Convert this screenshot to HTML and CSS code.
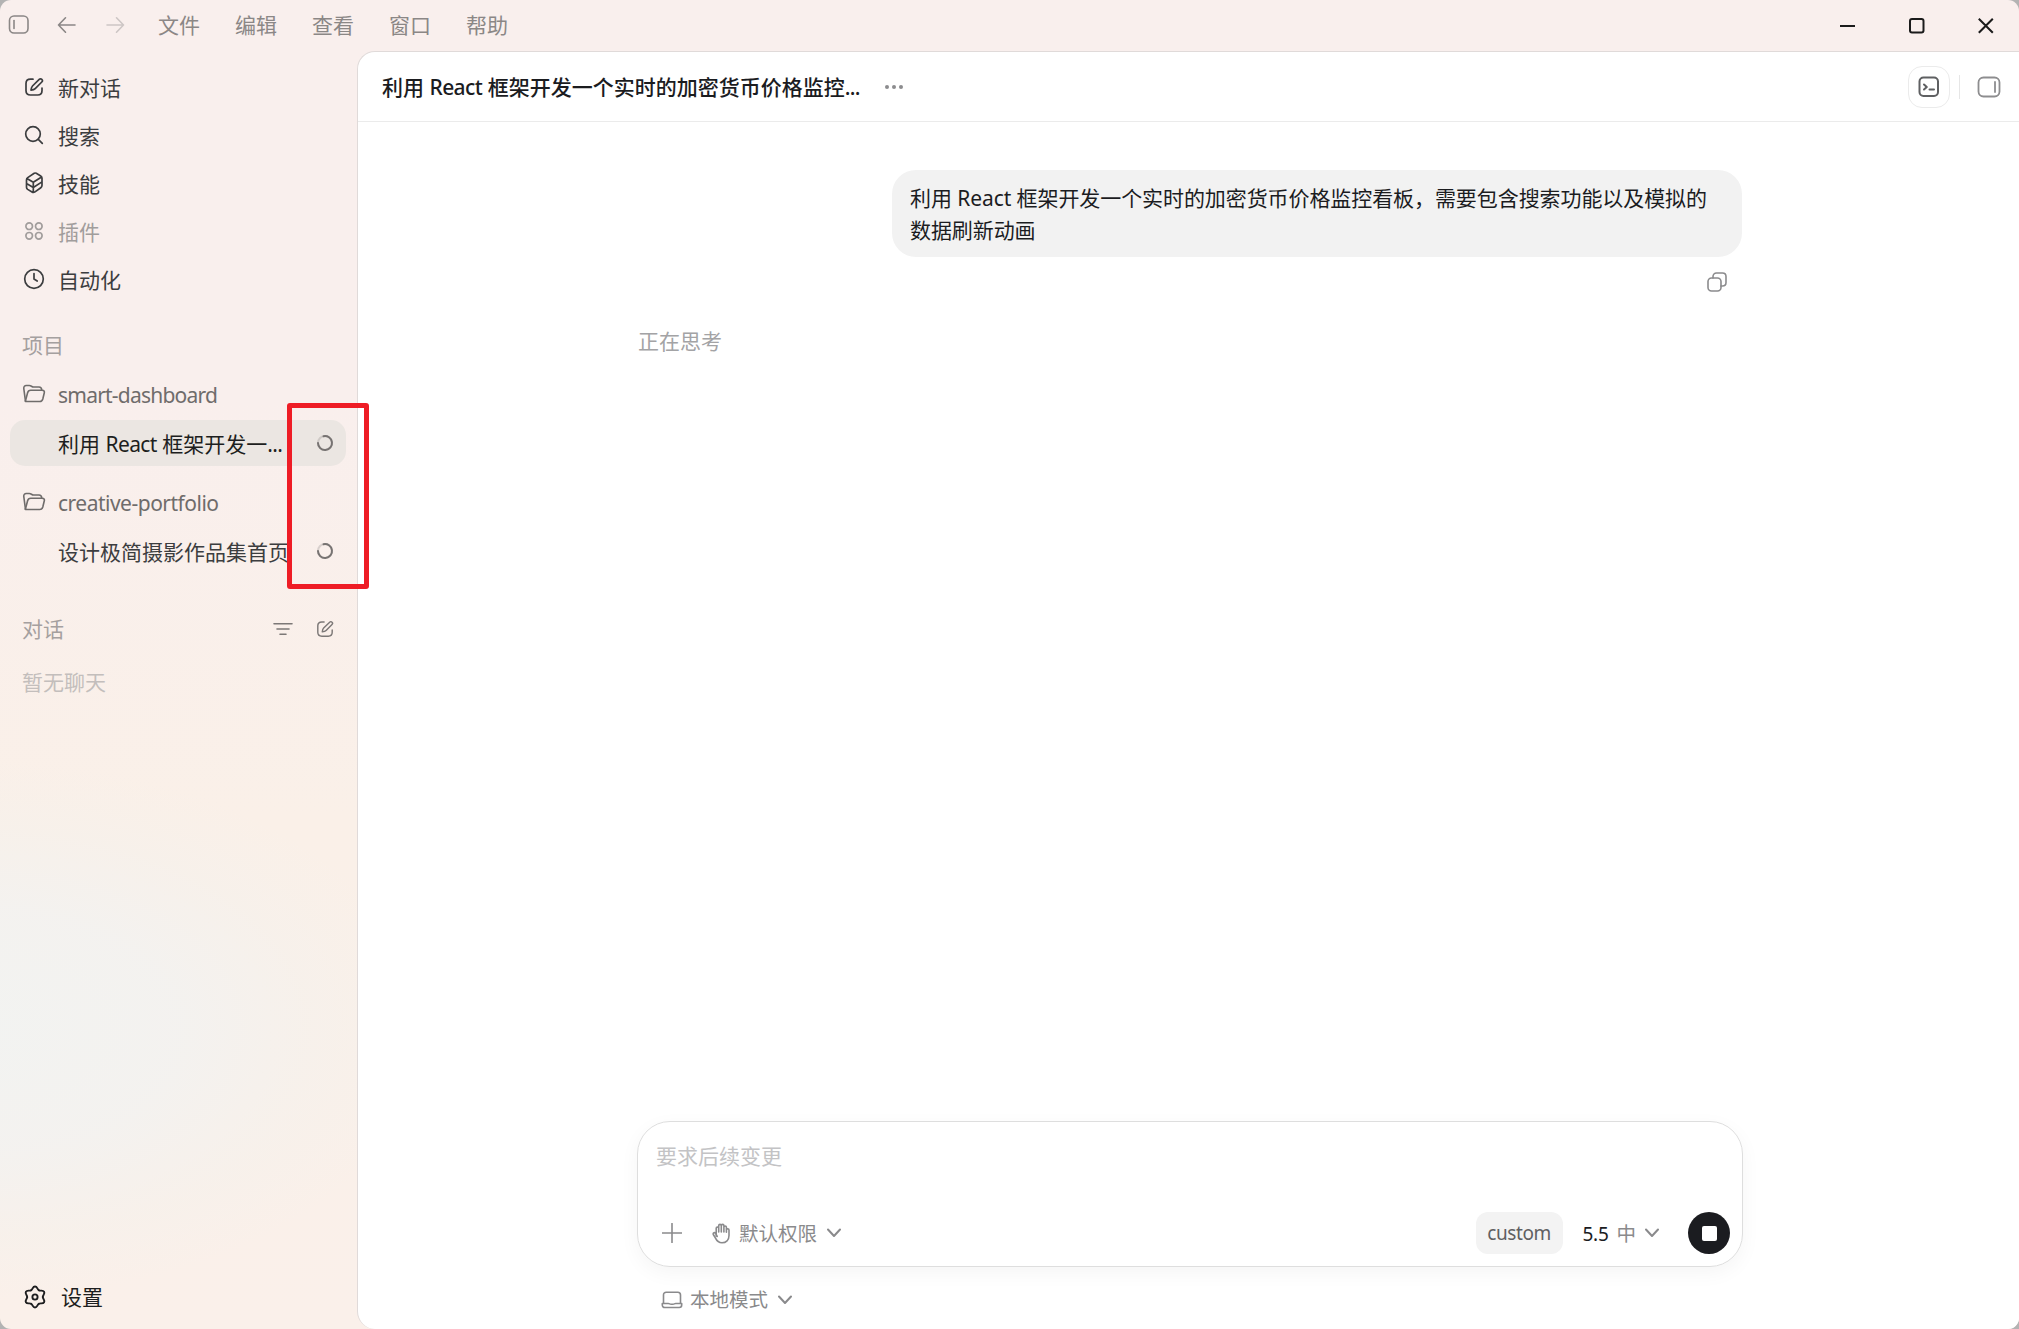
FILE: index.html
```
<!DOCTYPE html>
<html lang="zh-CN">
<head>
<meta charset="utf-8">
<title>对话</title>
<link rel="stylesheet" href="styles.css">
</head>
<body>
<svg width="0" height="0" class="defs">
  <symbol id="edit" viewBox="0 0 20 20"><path d="M9 2.200H6.500C3.800 2.200 2 3.800 2 6.500v7.200C2 16.400 3.800 18 6.500 18h7.200c2.700 0 4.300-1.800 4.300-4.300V11"/><path d="M15.200 2.400c.8-.8 1.900-.7 2.600 0s.8 1.800 0 2.600l-6.600 6.700c-.8.800-2 1.300-4.200 1.500.2-2.200.6-3.300 1.500-4.200z"/></symbol>
  <symbol id="folder" viewBox="0 0 24 20"><path d="M3.500 17.300L1.800 4.600C1.600 2.800 2.500 1.500 4.300 1.500h3c2 0 2.300 1.500 4.300 1.500H17c1.600 0 2.600 1 2.700 3"/><path d="M3.400 17.100L5.600 8.800C6 7 7 6.200 8.700 6.200h11.500c1.800 0 2.500 1 2.100 2.600l-1.500 6.200c-.5 1.800-1.300 2.500-3 2.500H5.300c-1.300 0-2-.1-1.900-.4z"/></symbol>
  <symbol id="chev" viewBox="0 0 14 10"><path d="M1 1.500l6 6.500 6-6.500"/></symbol>
  <symbol id="spin" viewBox="0 0 18 18"><circle cx="9" cy="9" r="7" opacity=".25"/><path d="M7.500 2.200A7 7 0 1 1 2 9"/></symbol>
  <path id="lobe" d="M8.100 5.250C9.900 4.200 9.600 1.500 12 1.500S14.100 4.200 15.900 5.250"/>
</svg>
<div class="window">
  <header class="titlebar">
    <svg class="tb-side" width="22" height="20" viewBox="0 0 22 20"><rect x="1.500" y="1" width="18.500" height="17" rx="4.500"/><path d="M6 5.500v8"/></svg>
    <svg class="tb-back" width="20" height="18" viewBox="0 0 20 18"><path d="M8.500 1.800L1.500 9l7 7.200M1.500 9h16.500"/></svg>
    <svg class="tb-fwd" width="20" height="18" viewBox="0 0 20 18"><path d="M10.500 1.800L17.500 9l-7 7.200M17.500 9H1"/></svg>
    <nav class="menus"><span>文件</span><span>编辑</span><span>查看</span><span>窗口</span><span>帮助</span></nav>
    <div class="controls">
      <svg width="16" height="16" viewBox="0 0 16 16"><path d="M0 8h15"/></svg>
      <svg width="16" height="16" viewBox="0 0 16 16"><rect x="1" y="1" width="13.500" height="13.500" rx="2"/></svg>
      <svg width="16" height="16" viewBox="0 0 16 16"><path d="M.8.800l14 14M14.800.800l-14 14"/></svg>
    </div>
  </header>
  <div class="body">
    <aside class="sidebar">
      <nav class="nav">
        <a class="item"><svg width="20" height="20"><use href="#edit"/></svg>新对话</a>
        <a class="item"><svg width="20" height="20" viewBox="0 0 20 20"><circle cx="9" cy="9" r="7.300"/><path d="M14.300 14.300l4 4"/></svg>搜索</a>
        <a class="item"><svg width="20" height="22" viewBox="0 0 20 22"><path d="M10.200 1.300Q11.300.700 12.300 1.300L16.700 4Q18 4.800 18 6.300V13.300Q18 14.800 16.800 15.700L11 19.900Q9.500 21 8 20.100L3.700 17.400Q2.500 16.600 2.500 15.200V8Q2.500 6.500 3.700 5.600ZM2.900 6.500L9.300 10.300L17.600 5M9.300 10.300V20.500M2.500 11.600L9.300 15.500L18 9.900"/></svg>技能</a>
        <a class="item muted"><svg width="20" height="20" viewBox="0 0 20 20"><circle cx="5.200" cy="5.200" r="3.300"/><circle cx="14.800" cy="5.200" r="3.300"/><circle cx="5.200" cy="14.800" r="3.300"/><circle cx="14.800" cy="14.800" r="3.300"/></svg>插件</a>
        <a class="item"><svg class="wide" width="22" height="22" viewBox="0 0 22 22"><circle cx="11" cy="11" r="9.300"/><path d="M11 5.500V11l3.200 2"/></svg>自动化</a>
      </nav>
      <div class="section">项目</div>
      <div class="folder"><svg width="24" height="20"><use href="#folder"/></svg><span class="f1">smart-dashboard</span></div>
      <div class="chat active"><span>利用 <i>React</i> 框架开发一<i>...</i></span><svg width="18" height="18"><use href="#spin"/></svg></div>
      <div class="folder second"><svg width="24" height="20"><use href="#folder"/></svg><span class="f2">creative-portfolio</span></div>
      <div class="chat"><span>设计极简摄影作品集首页</span><svg width="18" height="18"><use href="#spin"/></svg></div>
      <div class="section talk">对话
        <svg class="filter" width="20" height="14" viewBox="0 0 20 14"><path d="M1 1.700h18M4 7h12M7 12.300h6"/></svg>
        <svg width="18" height="18"><use href="#edit"/></svg>
      </div>
      <div class="empty">暂无聊天</div>
      <div class="settings"><svg width="24" height="24" viewBox="0 0 24 24"><use href="#lobe"/><use href="#lobe" transform="rotate(60 12 12)"/><use href="#lobe" transform="rotate(120 12 12)"/><use href="#lobe" transform="rotate(180 12 12)"/><use href="#lobe" transform="rotate(240 12 12)"/><use href="#lobe" transform="rotate(300 12 12)"/><circle cx="12" cy="12" r="2.600"/></svg>设置</div>
    </aside>
    <main class="panel">
      <div class="head">
        <h1>利用 <i>React</i> 框架开发一个实时的加密货币价格监控<i>...</i></h1>
        <svg class="dots" width="20" height="6" viewBox="0 0 20 6"><circle cx="3" cy="3" r="2"/><circle cx="10" cy="3" r="2"/><circle cx="17" cy="3" r="2"/></svg>
        <button class="term"><svg width="22" height="22" viewBox="0 0 22 22"><rect x="1.500" y="1.500" width="18.500" height="18.500" rx="4"/><path d="M6 8.500l2.800 2.500L6 13.500M11.500 13.500h4.500"/></svg></button>
        <span class="sep"></span>
        <svg class="rpanel" width="24" height="22" viewBox="0 0 24 22"><rect x="1.500" y="1.500" width="21" height="19" rx="5"/><path d="M18 6v10"/></svg>
      </div>
      <div class="thread">
        <div class="bubble">利用 React 框架开发一个实时的加密货币价格监控看板，需要包含搜索功能以及模拟的数据刷新动画</div>
        <svg class="copy" width="20" height="20" viewBox="0 0 20 20"><rect x="1" y="6" width="13" height="13" rx="3.500"/><path d="M6 6V4.500C6 2.500 7.500 1 9.500 1h6C17.500 1 19 2.500 19 4.500v6c0 2-1.500 3.500-3.500 3.500H14"/></svg>
        <div class="thinking">正在思考</div>
      </div>
      <div class="composer">
        <div class="placeholder">要求后续变更</div>
        <div class="tools">
          <svg class="plus" width="20" height="20" viewBox="0 0 20 20"><path d="M10 .5v19M.5 10h19"/></svg>
          <svg class="hand" width="18" height="21" viewBox="0 0 18 21"><path d="M4.200 13V5.300c0-1.700 2.500-1.700 2.500 0V9M6.700 5.300V2.700c0-1.800 2.600-1.800 2.600 0V9M9.300 2.700c0-1.800 2.600-1.800 2.600 0V9M11.900 4.300c0-1.800 2.500-1.800 2.500 0v5M14.400 7c0-1.700 2.600-1.700 2.600 0v5.500c0 4.500-3 7.300-7 7.300-3.500 0-5.300-2-6.500-4.600L1.300 11.500c-.6-1.800 1.400-2.500 2.300-1L5.200 13.500"/></svg>
          <span class="perm">默认权限</span>
          <svg class="chev" width="14" height="10"><use href="#chev"/></svg>
          <span class="custom">custom</span>
          <span class="ver">5.5</span><span class="mid">中</span>
          <svg class="chev c2" width="14" height="10"><use href="#chev"/></svg>
          <span class="stop"></span>
        </div>
      </div>
      <div class="mode">
        <svg width="22" height="18" viewBox="0 0 22 18"><path d="M2.500 12.500V4c0-1.700 1-2.700 2.700-2.700h11.600c1.700 0 2.700 1 2.700 2.700v8.500M1.300 12.500h6c1.200 0 1.500.7 2.700.7h2c1.200 0 1.500-.7 2.700-.7h6v1.500c0 1.500-1 2.500-2.500 2.500H3.800c-1.500 0-2.500-1-2.500-2.500z"/></svg>
        <span>本地模式</span>
        <svg class="chev" width="14" height="10"><use href="#chev"/></svg>
      </div>
    </main>
  </div>
  <div class="marker"></div>
</div>
</body>
</html>
```
FILE: styles.css
```
* { box-sizing: border-box; }
html { background: #b3b3b3; }
body { margin: 0; height: 1329px; overflow: hidden; font: 21px/30px "Noto Sans", "Noto Sans CJK SC", sans-serif; color: #3c3d3f; }
.defs { position: absolute; }
i { font-style: normal; letter-spacing: -0.6px; }
svg { flex: none; fill: none; stroke: currentColor; stroke-width: 1.6; stroke-linecap: round; stroke-linejoin: round; }
.window {
  position: relative; height: 1329px; display: flex; flex-direction: column; border-radius: 11px; overflow: hidden;
  background:
    radial-gradient(ellipse 460px 270px at -30px 1030px, #f2f3f1 0, #f3f2f0e6 45%, #f5f1ec99 75%, #faf0e900 100%),
    linear-gradient(#f9efed 0, #f9efed 400px, #faf0e8 820px, #faf0ea 100%);
}
.titlebar { height: 51px; flex: none; display: flex; align-items: center; color: #8b8786; padding: 0 25px 0 8px; }
.titlebar > svg { margin-top: -1px; }
.titlebar > .tb-back { margin-left: 27px; }
.titlebar > .tb-fwd { margin-left: 29px; color: #cdc6c5; }
.menus { display: flex; gap: 35px; margin: -1px 0 0 32px; }
.controls { margin-left: auto; display: flex; gap: 53px; color: #1b1b1b; padding-top: 1px; }
.controls svg { stroke-width: 2; stroke-linecap: butt; }
.body { flex: 1; display: flex; min-height: 0; }
.sidebar { width: 357px; flex: none; padding: 13px 11px 0 10px; display: flex; flex-direction: column; }
.item { display: flex; align-items: center; height: 48px; padding-left: 14px; }
.item svg { margin: -2px 14px 0 0; stroke-width: 1.7; }
.item .wide { margin: -2px 13px 0 -1px; }
.muted { color: #a19d9c; }
.section { height: 46px; display: flex; align-items: center; padding-left: 12px; color: #a5a09f; margin-top: 18px; }
.folder { height: 50px; display: flex; align-items: center; gap: 12px; padding-left: 12px; color: #6f6c6b; margin-top: 2px; }
.folder svg { margin-top: -2px; }
.folder span { letter-spacing: -0.78px; margin-top: -1px; }
.folder .f2 { letter-spacing: -0.5px; }
.chat { height: 46px; border-radius: 15px; display: flex; align-items: center; justify-content: space-between; padding: 2px 12px 0 48px; white-space: nowrap; }
.active { background: #ebe6e2; color: #1d1e20; }
.chat svg { stroke-width: 2; color: #777372; margin-top: -3px; }
.second { margin-top: 12px; }
.talk { margin-top: 32px; padding-right: 12px; color: #a5a09f; }
.talk svg { color: #7c7877; }
.talk .filter { margin: 0 23px 0 auto; }
.empty { color: #c3bebc; margin: 15px 0 0 12px; }
.settings { margin: auto 0 17px 13px; display: flex; align-items: center; gap: 14px; color: #1d1e20; }
.settings svg { margin-top: -1px; stroke-width: 1.9; }
.panel { flex: 1; background: #fff; border: 1px solid #e0dad9; border-width: 1px 0 0 1px; border-radius: 18px 0 0 18px; display: flex; flex-direction: column; }
.head { height: 70px; flex: none; border-bottom: 1px solid #ebebeb; display: flex; align-items: center; padding: 0 18px 0 24px; }
h1 { font: 500 21px/30px "Noto Sans", "Noto Sans CJK SC", sans-serif; margin: 0; color: #1b1c1f; white-space: nowrap; }
.dots { fill: #8c8c8e; stroke: none; margin-left: 24px; }
.term { margin: 0 0 0 auto; width: 42px; height: 42px; border: 1px solid #ebebeb; border-radius: 14px; background: none; display: grid; place-items: center; color: #5f6062; padding: 0; }
.term svg { stroke-width: 2; }
.sep { width: 1px; height: 24px; background: #e6e6e6; margin: 0 17px 0 9px; }
.rpanel { color: #8d8d8f; stroke-width: 1.8; }
.thread { width: 1104px; margin-left: 280px; padding: 48px 0 0; flex: 1; display: flex; flex-direction: column; }
.bubble { width: 850px; height: 87px; align-self: flex-end; background: #f2f2f2; border-radius: 24px; padding: 12px 18px; line-height: 32px; color: #1b1c1f; letter-spacing: -0.08px; }
.copy { align-self: flex-end; margin: 15px 15px 0 0; color: #8b8b8d; }
.thinking { margin-top: 34px; color: #a3a3a5; }
.composer { width: 1106px; height: 146px; flex: none; margin-left: 279px; border: 1px solid #dedede; border-radius: 33px; box-shadow: 0 6px 20px #0000000b; padding: 19px 12px 12px 18px; display: flex; flex-direction: column; justify-content: space-between; color: #8a8a8c; }
.placeholder { color: #c3c3c5; }
.tools { display: flex; align-items: center; height: 42px; padding-left: 6px; }
.hand { margin: 0 8px 0 30px; }
.perm { padding: 1px 0 0 1px; }
.perm, .mode span { font-size: 19.5px; }
.chev { margin-left: 10px; stroke-width: 2; }
.custom { margin-left: auto; width: 87px; height: 42px; border-radius: 12px; background: #f3f3f3; color: #5f6062; font-size: 19px; letter-spacing: -0.4px; line-height: 42px; text-align: center; }
.ver { margin-left: 20px; color: #1b1c1f; font-size: 19px; letter-spacing: -0.3px; padding-top: 1px; }
.mid { margin-left: 8px; font-size: 19.5px; padding-top: 1px; }
.c2 { margin-left: 9px; }
.stop { width: 42px; height: 42px; border-radius: 50%; background: #1b1c20; margin-left: 29px; display: grid; place-items: center; }
.stop::after { content: ""; width: 15px; height: 15px; border-radius: 2px; background: #fff; }
.mode { height: 62px; flex: none; display: flex; align-items: center; padding: 4px 0 0 303px; color: #8a8a8c; }
.mode span { margin-left: 7px; }
.marker { position: absolute; left: 287px; top: 403px; width: 82px; height: 186px; border: 5px solid #ee1c25; border-radius: 3px; }
```
